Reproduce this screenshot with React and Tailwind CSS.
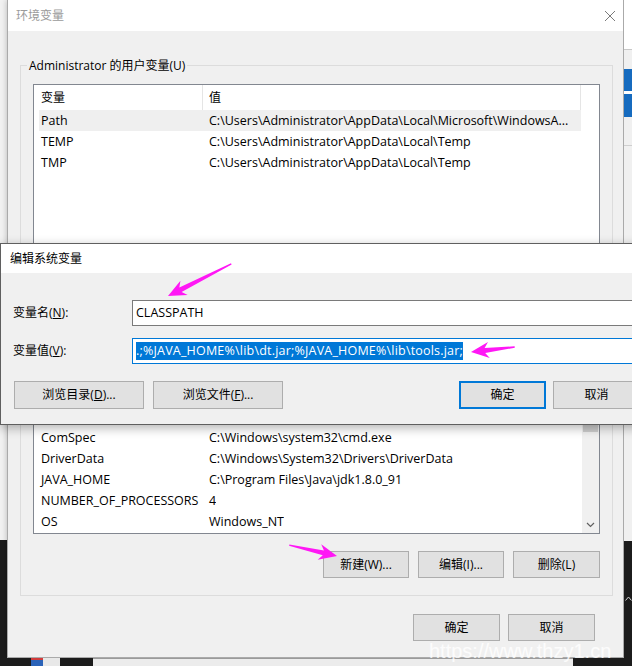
import React from "react";

const userRows = [
  ["Path", "C:\\Users\\Administrator\\AppData\\Local\\Microsoft\\WindowsA...", true],
  ["TEMP", "C:\\Users\\Administrator\\AppData\\Local\\Temp"],
  ["TMP", "C:\\Users\\Administrator\\AppData\\Local\\Temp"],
];

const sysRows = [
  ["asl.log", "Destination=file"],
  ["ChocolateyInstall", "C:\\ProgramData\\chocolatey"],
  ["CLASSPATH", ".;%JAVA_HOME%\\lib\\dt.jar;%JAVA_HOME%\\lib\\tools.jar;"],
  ["ComputerName", "DESKTOP-PC"],
  ["ComSpec", "C:\\Windows\\system32\\cmd.exe"],
  ["DriverData", "C:\\Windows\\System32\\Drivers\\DriverData"],
  ["JAVA_HOME", "C:\\Program Files\\Java\\jdk1.8.0_91"],
  ["NUMBER_OF_PROCESSORS", "4"],
  ["OS", "Windows_NT"],
];

function Btn({ children, className }) {
  return (
    <div
      className={
        "flex items-center justify-center h-[27px] bg-[#e1e1e1] border border-[#adadad] text-[12px] text-black shrink-0 " +
        className
      }
    >
      <span className="whitespace-nowrap">{children}</span>
    </div>
  );
}

function ListBox({ rows, heightClass, scroll }) {
  return (
    <div className={"flex border border-[#828790] bg-white overflow-hidden " + heightClass}>
      <div className="flex-1 min-w-0 overflow-hidden flex flex-col">
        <div className="flex h-[25px] shrink-0">
          <div className="w-[169px] shrink-0 border-r border-[#e5e5e5] pl-[7px] flex items-center">变量</div>
          <div className="w-[378px] shrink-0 border-r border-[#e5e5e5] pl-[6px] flex items-center">值</div>
        </div>
        {rows.map(([n, v, sel], i) => (
          <div
            key={i}
            className={
              "ml-[5px] w-[542px] h-[21px] shrink-0 flex items-center pt-[1px] text-[12.5px] " +
              (sel ? "bg-[#efefef]" : "")
            }
          >
            <div className="w-[164px] shrink-0 pl-[2px] whitespace-nowrap">{n}</div>
            <div className="pl-[6px] whitespace-nowrap overflow-hidden">{v}</div>
          </div>
        ))}
      </div>
      {scroll && (
        <div className="w-[17px] shrink-0 bg-[#f0f0f0] flex flex-col">
          <div className="h-[17px] shrink-0" />
          <div className="h-[97px] mx-[1px] bg-[#cdcdcd] shrink-0" />
          <div className="flex-1" />
          <div className="h-[17px] shrink-0 flex items-center justify-center">
            <svg width="9" height="6" viewBox="0 0 9 6">
              <path d="M1 1 L4.5 4.5 L8 1" fill="none" stroke="#606060" strokeWidth="1.2" />
            </svg>
          </div>
        </div>
      )}
    </div>
  );
}

function Arrow({ x, y, angle, len }) {
  const pts = `0,0 -18,-8 -14,-2.5 ${-len},-0.7 ${-len},0.7 -14,2.5 -18,8`;
  return <polygon points={pts} fill="#ff17f5" transform={`translate(${x} ${y}) rotate(${angle})`} />;
}

export default function App() {
  return (
    <div className="relative w-[632px] h-[666px] overflow-hidden flex flex-col bg-[#1c1c1c] text-[12px] text-black font-['Open_Sans','Noto_Sans_CJK_SC',sans-serif]">
      {/* desktop row */}
      <div className="flex h-[658px] shrink-0">
        {/* left strip */}
        <div className="w-[7px] shrink-0 flex flex-col">
          <div className="h-[540px] bg-[#f2f2f2]" />
          <div className="flex-1 bg-[#1c1c1c]" />
        </div>

        {/* main window */}
        <div className="w-[617px] shrink-0 h-[658px] border border-t-0 border-[#aaaaaa] flex flex-col bg-[#f0f0f0] shadow-[0_0_6px_rgba(0,0,0,0.25)]">
          <div className="h-[31px] shrink-0 bg-white flex items-center justify-between pl-[8px] pr-[8px]">
            <span className="text-[#9a9a9a]">环境变量</span>
            <svg width="10" height="10" viewBox="0 0 10 10">
              <path d="M0 0 L10 10 M10 0 L0 10" stroke="#7a7a7a" strokeWidth="1" />
            </svg>
          </div>

          <fieldset className="ml-[12px] mr-[10px] mt-[26px] border border-[#dcdcdc]">
            <legend className="ml-[6px] px-[2px] leading-[17px]">Administrator 的用户变量(U)</legend>
            <div className="mt-[10px] px-[12px] pb-[30px]">
              <ListBox rows={userRows} heightClass="h-[167px]" scroll={false} />
            </div>
          </fieldset>

          <fieldset className="ml-[12px] mr-[10px] mt-[8px] border border-[#dcdcdc]">
            <legend className="ml-[6px] px-[2px] leading-[17px]">系统变量(S)</legend>
            <div className="mt-[10px] px-[12px] pb-[17px]">
              <ListBox rows={sysRows} heightClass="h-[217px]" scroll={true} />
              <div className="mt-[17px] flex justify-end gap-[9px]">
                <Btn className="w-[86px]">新建(W)...</Btn>
                <Btn className="w-[86px]">编辑(I)...</Btn>
                <Btn className="w-[87px]">删除(L)</Btn>
              </div>
            </div>
          </fieldset>

          <div className="mt-[18px] mr-[28px] flex justify-end gap-[8px]">
            <Btn className="w-[87px]">确定</Btn>
            <Btn className="w-[87px]">取消</Btn>
          </div>
        </div>

        {/* right strip */}
        <div className="w-[8px] shrink-0 flex flex-col">
          <div className="h-[49px] bg-white" />
          <div className="h-[1px] bg-[#c8c8c8]" />
          <div className="h-[19px] bg-[#f0f0f0]" />
          <div className="h-[22px] bg-[#166bbf]" />
          <div className="h-[3px] bg-white" />
          <div className="h-[23px] bg-[#166bbf]" />
          <div className="h-[28px] bg-[#f0f0f0]" />
          <div className="h-[1px] bg-[#cfcfcf]" />
          <div className="h-[395px] bg-[#f0f0f0]" />
          <div className="flex-1 bg-[#1c1c1c] flex flex-col items-center pt-[55px]">
            <svg width="7" height="5" viewBox="0 0 7 5">
              <path d="M0.5 4.5 L3.5 1 L6.5 4.5" fill="none" stroke="#cfcfcf" strokeWidth="1" />
            </svg>
          </div>
        </div>
      </div>

      {/* bottom strip */}
      <div className="flex h-[8px] shrink-0">
        <div className="w-[31px] bg-[#1c1c1c]" />
        <div className="w-[12px] flex flex-col">
          <div className="h-[2px] bg-[#d23b3b]" />
          <div className="flex-1 bg-[#2b63b8]" />
        </div>
        <div className="w-[17px] bg-[#e8e8e8]" />
        <div className="w-[33px] bg-[#1c1c1c]" />
        <div className="w-[480px] bg-[#ececec] border-t border-[#9a9a9a]" />
        <div className="flex-1 bg-[#1c1c1c]" />
      </div>

      {/* edit dialog */}
      <div className="absolute left-0 top-[243px] w-[680px] h-[182px] border border-[#5f5f5f] bg-[#f0f0f0] flex flex-col shadow-[0_3px_10px_rgba(0,0,0,0.3)]">
        <div className="h-[29px] shrink-0 bg-white flex items-center pl-[9px]">编辑系统变量</div>
        <div className="flex flex-col">
          <div className="mt-[27px] flex items-center pl-[12px]">
            <div className="w-[119px] shrink-0">
              <span>
                变量名(<span className="underline">N</span>):
              </span>
            </div>
            <div className="w-[540px] h-[26px] border border-[#7a7a7a] bg-white flex items-center pl-[3px] text-[12.5px]">
              CLASSPATH
            </div>
          </div>
          <div className="mt-[12px] flex items-center pl-[12px]">
            <div className="w-[119px] shrink-0">
              <span>
                变量值(<span className="underline">V</span>):
              </span>
            </div>
            <div className="w-[540px] h-[26px] border border-[#0078d7] bg-white flex items-center pl-[3px]">
              <span className="bg-[#0078d7] text-white text-[12.5px] tracking-[0.2px] leading-[18px] whitespace-nowrap">
                .;%JAVA_HOME%\lib\dt.jar;%JAVA_HOME%\lib\tools.jar;
              </span>
            </div>
          </div>
          <div className="mt-[17px] flex pl-[13px]">
            <Btn className="w-[130px] h-[28px]">
              浏览目录(<span className="underline">D</span>)...
            </Btn>
            <Btn className="w-[130px] h-[28px] ml-[9px]">
              浏览文件(<span className="underline">F</span>)...
            </Btn>
            <div className="ml-[176px] w-[87px] h-[28px] shrink-0 flex items-center justify-center bg-[#e1e1e1] border-2 border-[#0078d7]">
              确定
            </div>
            <Btn className="w-[87px] h-[28px] ml-[7px]">取消</Btn>
          </div>
        </div>
      </div>

      {/* annotation arrows */}
      <svg className="absolute left-0 top-0 pointer-events-none" width="632" height="666" viewBox="0 0 632 666">
        <Arrow x={168} y={296} angle={153.1} len={71} />
        <Arrow x={471} y={352} angle={173.5} len={44} />
        <Arrow x={337} y={556} angle={12.9} len={49} />
      </svg>

      {/* watermark */}
      <div className="absolute left-[429px] top-[639px] text-[20px] leading-[24px] text-white/80 font-['Liberation_Sans',sans-serif] whitespace-nowrap">
        https://www.thzy1.cn
      </div>
    </div>
  );
}
